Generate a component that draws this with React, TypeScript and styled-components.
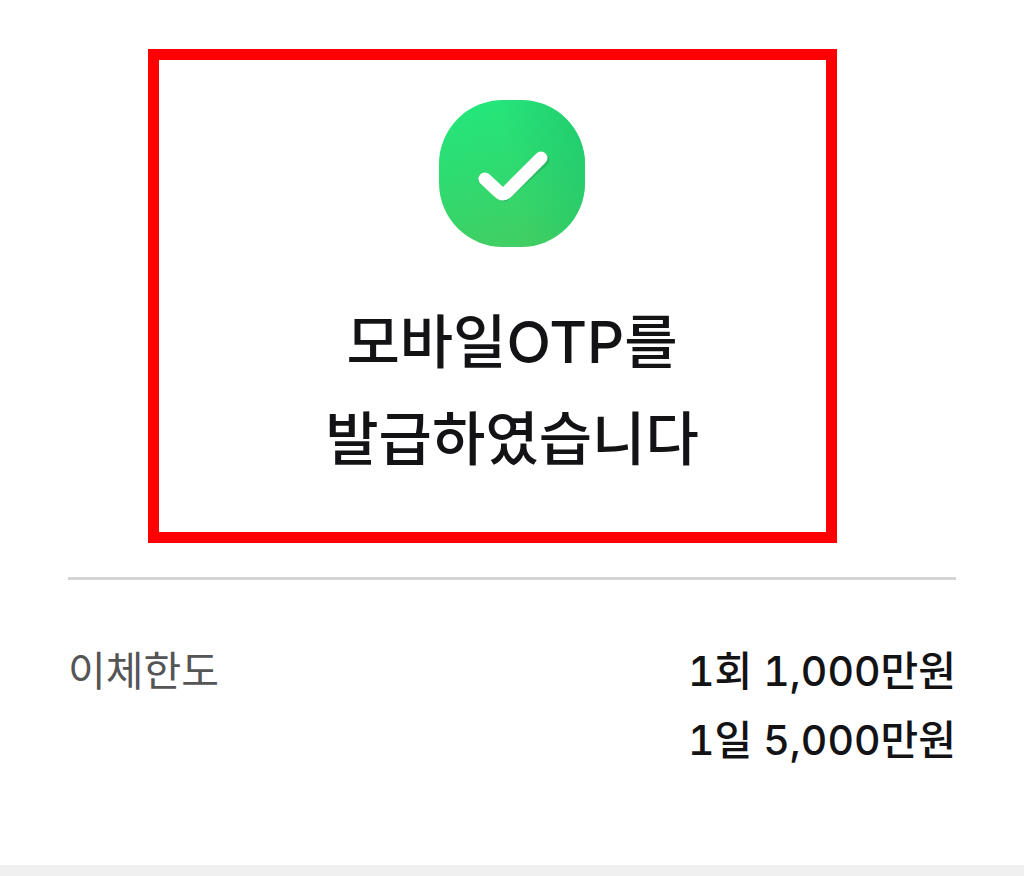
import React from "react";
import styled, { createGlobalStyle } from "styled-components";

const GlobalStyle = createGlobalStyle`
  * { box-sizing: border-box; }
  body {
    margin: 0;
    background: #fff;
    color: #131315;
    font-family: Inter, "Noto Sans CJK KR", sans-serif;
  }
`;

const Page = styled.main`
  display: flex;
  flex-direction: column;
  min-height: 100vh;
  padding-top: 49px;
  border-bottom: 11px solid #f0f0f0;
`;

const Notice = styled.section`
  display: flex;
  flex-direction: column;
  align-items: center;
  margin: 0 187px 0 148px;
  padding: 40px 0 44px 39px;
  border: 11px solid #fe0000;
`;

const Badge = styled.svg`
  display: block;
  width: 146px;
  height: 147px;
`;

const Title = styled.h1`
  margin: 47px 0 0;
  font-size: 58px;
  font-weight: 500;
  line-height: 97px;
  text-align: center;
  white-space: nowrap;
`;

const Details = styled.dl`
  display: flex;
  justify-content: space-between;
  margin: 34px 68px 0;
  padding-top: 57px;
  border-top: 3px solid #d3d3d3;
  font-size: 41px;
  line-height: 69px;
`;

const Label = styled.dt`
  color: #555;
`;

const Amounts = styled.dd`
  margin: 0;
  font-weight: 500;
  font-variant-numeric: tabular-nums;
  text-align: right;
`;

export default function App() {
  return (
    <>
      <GlobalStyle />
      <Page lang="ko">
        <Notice>
          <Badge viewBox="0 0 146 147" aria-hidden="true">
            <defs>
              <linearGradient id="base" x1="0.4" y1="0" x2="0.6" y2="1">
                <stop offset="0" stopColor="#24e67a" />
                <stop offset="0.5" stopColor="#30da70" />
                <stop offset="1" stopColor="#42ce62" />
              </linearGradient>
              <linearGradient id="shade" x1="0.5" y1="0.5" x2="1" y2="0.4">
                <stop offset="0" stopColor="#1fc86c" stopOpacity="0" />
                <stop offset="1" stopColor="#1fc86c" stopOpacity="0.7" />
              </linearGradient>
            </defs>
            <rect width="146" height="147" rx="64" fill="url(#base)" />
            <rect width="146" height="147" rx="64" fill="url(#shade)" />
            <path d="M46 80L65 95L104 60" fill="none" stroke="#209c50" strokeOpacity="0.45" strokeWidth="13" strokeLinecap="round" strokeLinejoin="round" />
            <path d="M46 79L60 92Q64 96 68 92L102 58" fill="none" stroke="#fff" strokeWidth="13" strokeLinecap="round" strokeLinejoin="round" />
          </Badge>
          <Title>모바일OTP를<br />발급하였습니다</Title>
        </Notice>
        <Details>
          <Label>이체한도</Label>
          <Amounts>1회 1,000만원<br />1일 5,000만원</Amounts>
        </Details>
      </Page>
    </>
  );
}
